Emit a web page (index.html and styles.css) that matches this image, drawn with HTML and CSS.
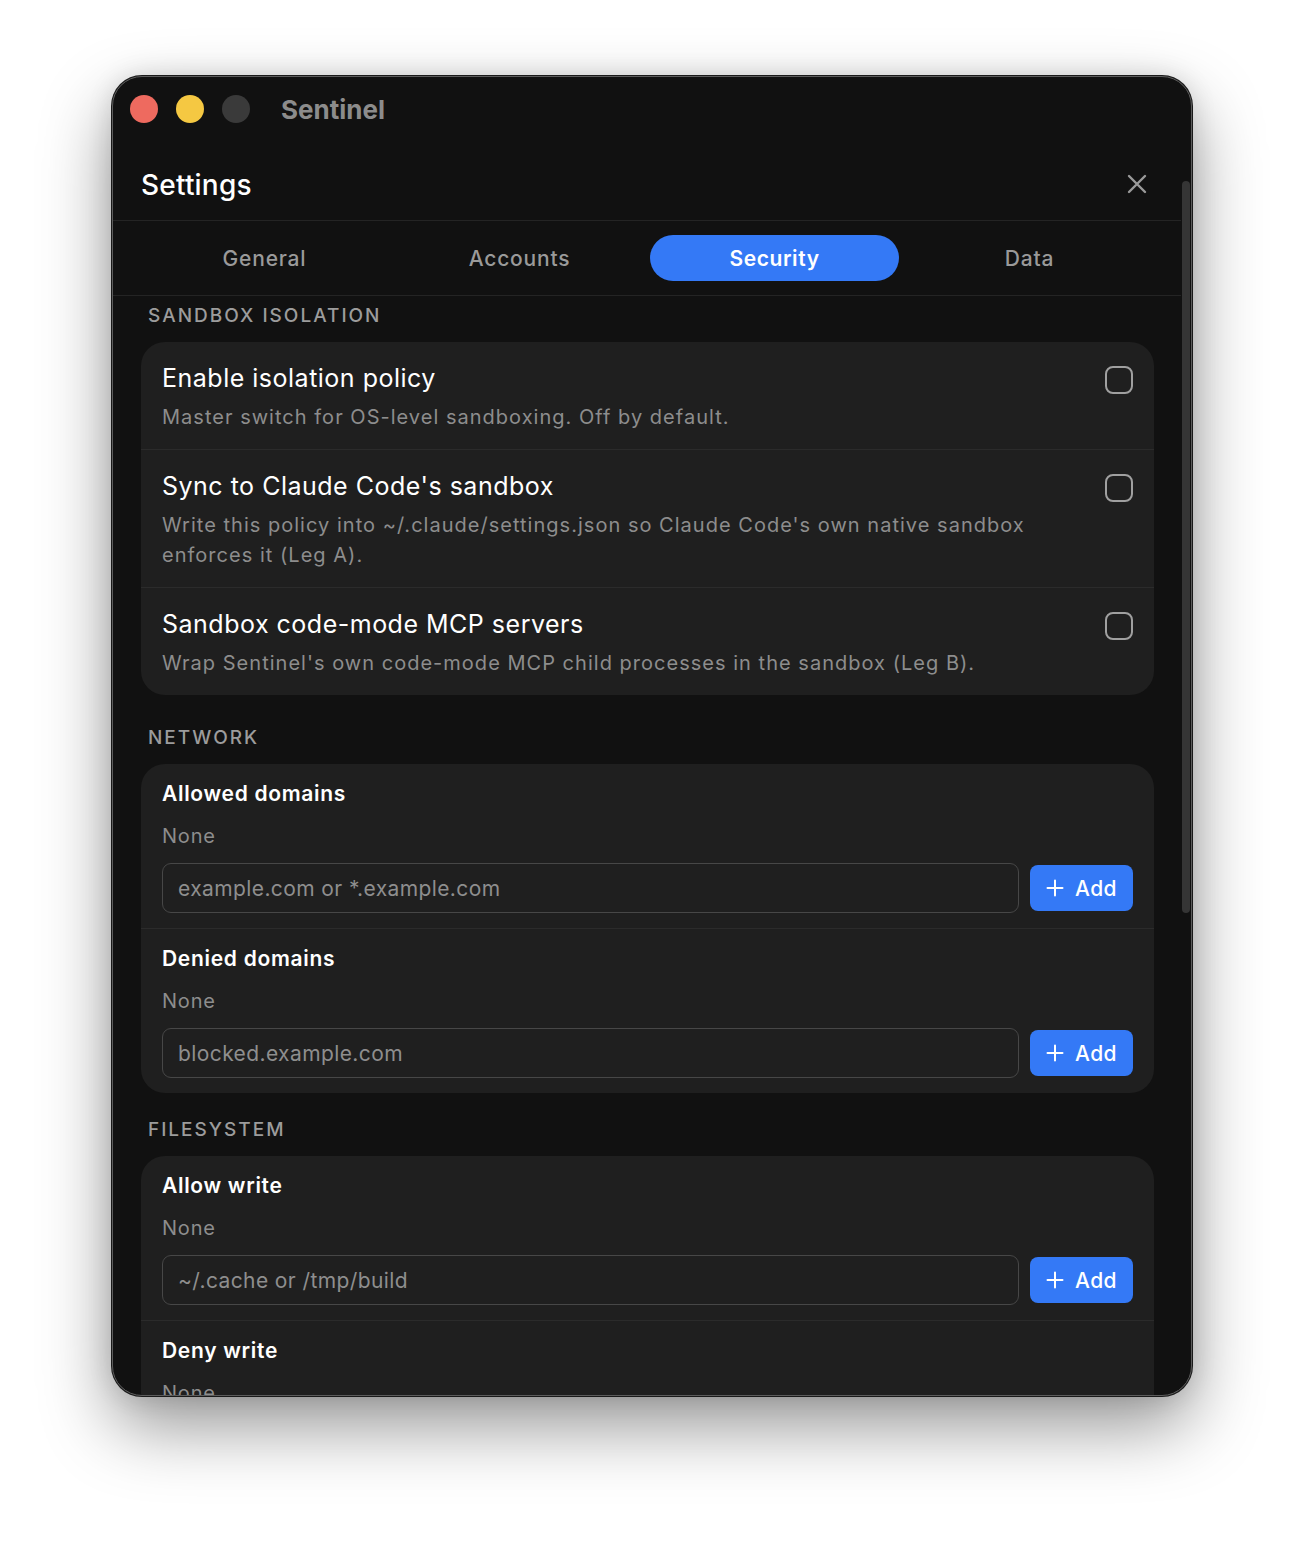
FILE: index.html
```html
<!DOCTYPE html>
<html lang="en">
<head>
    <meta charset="UTF-8">
    <title>Sentinel</title>
    <link rel="stylesheet" href="styles.css">
</head>
<body>
    <div class="window">
        <div class="titlebar">
            <span class="light red"></span>
            <span class="light yellow"></span>
            <span class="light gray"></span>
            <span class="app-name">Sentinel</span>
        </div>
        <div class="pane">
            <div class="main">
                <div class="header">
                    <h1>Settings</h1>
                    <svg class="close" width="22" height="22" viewBox="0 0 22 22">
                        <path d="M3 3 L19 19 M19 3 L3 19" stroke="#9a9a9a" stroke-width="2.4" stroke-linecap="round"/>
                    </svg>
                </div>
                <div class="tabs">
                    <div class="tab">General</div>
                    <div class="tab">Accounts</div>
                    <div class="tab active">Security</div>
                    <div class="tab">Data</div>
                </div>

                <div class="content">
                    <div class="section-label first">SANDBOX ISOLATION</div>
                    <div class="card">
                        <div class="toggle-row">
                            <div class="toggle-text">
                                <div class="row-title">Enable isolation policy</div>
                                <div class="row-desc">Master switch for OS-level sandboxing. Off by default.</div>
                            </div>
                            <span class="checkbox"></span>
                        </div>
                        <div class="toggle-row">
                            <div class="toggle-text">
                                <div class="row-title">Sync to Claude Code's sandbox</div>
                                <div class="row-desc">Write this policy into ~/.claude/settings.json so Claude Code's own native sandbox enforces it (Leg A).</div>
                            </div>
                            <span class="checkbox"></span>
                        </div>
                        <div class="toggle-row">
                            <div class="toggle-text">
                                <div class="row-title">Sandbox code-mode MCP servers</div>
                                <div class="row-desc">Wrap Sentinel's own code-mode MCP child processes in the sandbox (Leg B).</div>
                            </div>
                            <span class="checkbox"></span>
                        </div>
                    </div>

                    <div class="section-label">NETWORK</div>
                    <div class="card">
                        <div class="list-row">
                            <div class="list-title">Allowed domains</div>
                            <div class="list-empty">None</div>
                            <div class="add-line">
                                <input class="field" type="text" placeholder="example.com or *.example.com">
                                <button class="add-btn"><svg width="18" height="18" viewBox="0 0 18 18"><path d="M9 1.5 V16.5 M1.5 9 H16.5" stroke="#fff" stroke-width="2" stroke-linecap="round"/></svg>Add</button>
                            </div>
                        </div>
                        <div class="list-row">
                            <div class="list-title">Denied domains</div>
                            <div class="list-empty">None</div>
                            <div class="add-line">
                                <input class="field" type="text" placeholder="blocked.example.com">
                                <button class="add-btn"><svg width="18" height="18" viewBox="0 0 18 18"><path d="M9 1.5 V16.5 M1.5 9 H16.5" stroke="#fff" stroke-width="2" stroke-linecap="round"/></svg>Add</button>
                            </div>
                        </div>
                    </div>

                    <div class="section-label fs">FILESYSTEM</div>
                    <div class="card">
                        <div class="list-row">
                            <div class="list-title">Allow write</div>
                            <div class="list-empty">None</div>
                            <div class="add-line">
                                <input class="field" type="text" placeholder="~/.cache or /tmp/build">
                                <button class="add-btn"><svg width="18" height="18" viewBox="0 0 18 18"><path d="M9 1.5 V16.5 M1.5 9 H16.5" stroke="#fff" stroke-width="2" stroke-linecap="round"/></svg>Add</button>
                            </div>
                        </div>
                        <div class="list-row">
                            <div class="list-title">Deny write</div>
                            <div class="list-empty">None</div>
                        </div>
                    </div>
                </div>
            </div>
            <div class="gutter">
                <div class="thumb"></div>
            </div>
        </div>
    </div>
</body>
</html>
```

FILE: styles.css
```css
* {
    margin: 0;
    padding: 0;
    box-sizing: border-box;
}

html {
    background: #fff;
}

body {
    min-height: 1544px;
    padding: 76px 0 0 112px;
    font-family: Inter, "Noto Sans", sans-serif;
    -webkit-font-smoothing: antialiased;
}

.window {
    width: 1080px;
    height: 1320px;
    background: #111;
    border: 1px solid #5c5c5c;
    border-radius: 30px;
    overflow: hidden;
    display: flex;
    flex-direction: column;
    box-shadow: 0 0 0 1px #1a1a1a, 0 30px 70px rgba(0, 0, 0, 0.42), 0 0 26px rgba(0, 0, 0, 0.12);
}

/* title bar */
.titlebar {
    height: 64px;
    flex: none;
    display: flex;
    align-items: center;
    padding: 0 0 0 17px;
}

.light {
    width: 28px;
    height: 28px;
    border-radius: 50%;
    margin-right: 18px;
}

.red { background: #ee6a5f; }
.yellow { background: #f5c842; }
.gray { background: #3a3a3a; }

.app-name {
    margin-left: 13px;
    font-size: 26px;
    font-weight: 700;
    color: #8c8c8c;
}

.pane {
    flex: 1;
    display: flex;
    min-height: 0;
}

.main {
    flex: 1;
    overflow: hidden;
}

.gutter {
    width: 10px;
    flex: none;
    padding: 40px 1px 0 1px;
}

.thumb {
    height: 732px;
    border-radius: 4px;
    background: #353535;
}

/* header */
.header {
    height: 80px;
    display: flex;
    align-items: center;
    justify-content: space-between;
    padding: 8px 33px 0 28px;
    border-bottom: 1px solid #242424;
}

.header h1 {
    font-size: 28px;
    font-weight: 500;
    color: #fff;
    letter-spacing: 0.2px;
}

.close {
    margin-top: -2px;
}

/* tabs */
.tabs {
    display: grid;
    grid-template-columns: repeat(4, 1fr);
    padding: 14px 24px;
    border-bottom: 1px solid #242424;
}

.tab {
    height: 46px;
    margin: 0 3px;
    border-radius: 23px;
    display: flex;
    align-items: center;
    justify-content: center;
    font-size: 21px;
    font-weight: 500;
    letter-spacing: 0.8px;
    color: #9a9a9a;
}

.tab.active {
    background: #3479f6;
    color: #fff;
    font-weight: 600;
    letter-spacing: 0.6px;
}

/* content */
.content {
    padding: 0 27px 0 28px;
}

.section-label {
    padding: 32px 0 0 7px;
    margin-bottom: 15px;
    line-height: 22px;
    font-size: 19px;
    font-weight: 500;
    letter-spacing: 2px;
    color: #9c9c9c;
}

.section-label.first {
    padding-top: 9px;
}

.section-label.fs {
    padding-top: 26px;
}

.card {
    background: #1f1f1f;
    border-radius: 24px;
}

.toggle-row {
    display: flex;
    align-items: flex-start;
    padding: 21px 21px 17px;
    border-bottom: 1px solid #2b2b2b;
}

.toggle-row:last-child,
.list-row:last-child {
    border-bottom: none;
}

.toggle-text {
    flex: 1;
}

.row-title {
    font-size: 25px;
    line-height: 30px;
    letter-spacing: 0.5px;
    color: #fff;
}

.row-desc {
    margin-top: 9px;
    font-size: 20px;
    line-height: 30px;
    letter-spacing: 1.02px;
    color: #8d8d8d;
}

.checkbox {
    flex: none;
    width: 28px;
    height: 28px;
    margin: 3px 0 0 20px;
    border: 2.5px solid #a0a0a0;
    border-radius: 8px;
}

.list-row {
    padding: 17px 21px 15px;
    border-bottom: 1px solid #2b2b2b;
}

.list-title {
    font-size: 21px;
    line-height: 26px;
    font-weight: 600;
    letter-spacing: 0.7px;
    color: #fff;
}

.list-empty {
    margin-top: 16px;
    font-size: 20px;
    line-height: 26px;
    letter-spacing: 0.8px;
    color: #8d8d8d;
}

.add-line {
    margin-top: 14px;
    display: flex;
    align-items: center;
    gap: 11px;
}

.field {
    flex: 1;
    height: 50px;
    padding: 0 15px;
    background: #1f1f1f;
    border: 1.5px solid #474747;
    border-radius: 9px;
    font-family: Inter, "Noto Sans", sans-serif;
    font-size: 21px;
    letter-spacing: 0.4px;
    color: #fff;
    outline: none;
}

.field::placeholder {
    color: #8e8e8e;
}

.add-btn {
    width: 103px;
    height: 46px;
    border: none;
    border-radius: 8px;
    background: #3479f6;
    color: #fff;
    font-family: Inter, "Noto Sans", sans-serif;
    font-size: 21px;
    font-weight: 500;
    letter-spacing: 0.4px;
    display: flex;
    align-items: center;
    justify-content: center;
    gap: 11px;
}
```
